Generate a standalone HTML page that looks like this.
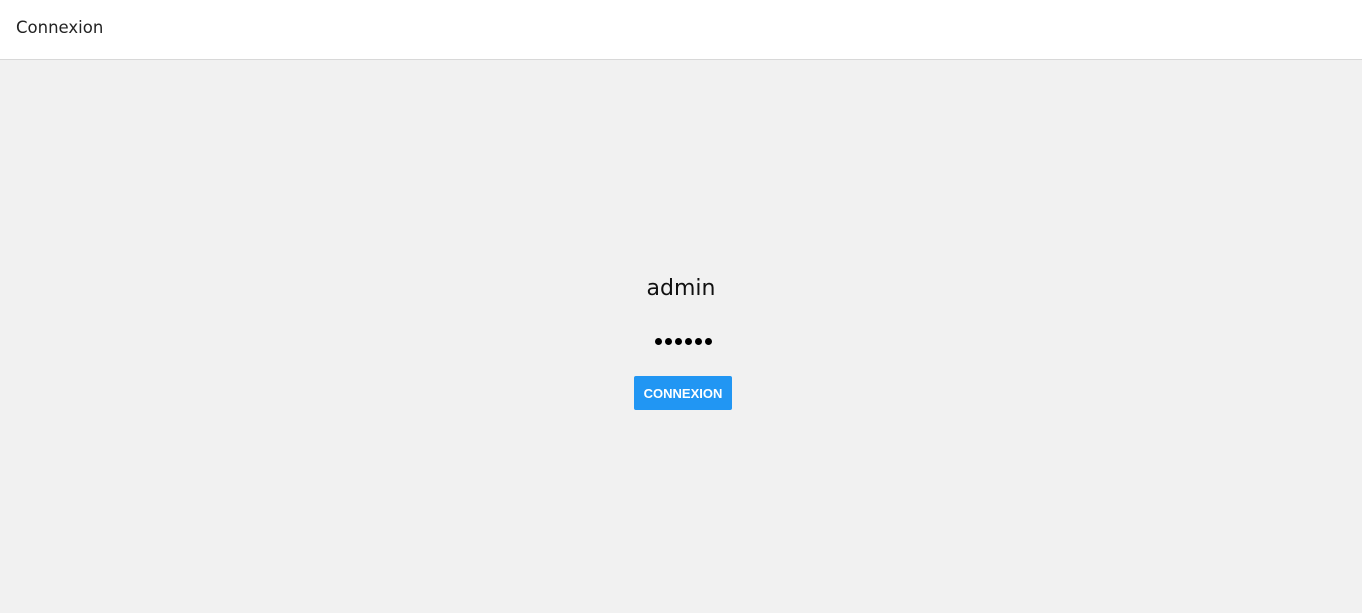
<!DOCTYPE html>
<html><head><style>
body{margin:0;width:1362px;height:613px;background:#f1f1f1;font-family:"DejaVu Sans","Liberation Sans",sans-serif;overflow:hidden;position:relative}
.h{position:absolute;top:0;left:0;right:0;height:59px;background:#fff;border-bottom:1px solid #d8d8d8}
.h span{position:absolute;left:16px;top:18px;font-size:16.5px;color:#222}
.a{position:absolute;left:0;right:0;top:276px;text-align:center;font-size:22px;color:#111}
.p{position:absolute;left:655px;top:338px;width:60px;height:8px}
.p i{display:block;position:absolute;top:0;width:7px;height:7px;border-radius:50%;background:#000}
.b{position:absolute;left:634px;top:376px;width:98px;height:34px;background:#2196f3;color:#fff;border-radius:2px;font-size:13px;font-weight:bold;text-align:center;line-height:35px;font-family:"Liberation Sans",sans-serif}
</style></head><body>
<div class="h"><span>Connexion</span></div>
<div class="a">admin</div>
<div class="p"><i style="left:0"></i><i style="left:10px"></i><i style="left:20px"></i><i style="left:30px"></i><i style="left:40px"></i><i style="left:50px"></i></div>
<div class="b">CONNEXION</div>
</body></html>
